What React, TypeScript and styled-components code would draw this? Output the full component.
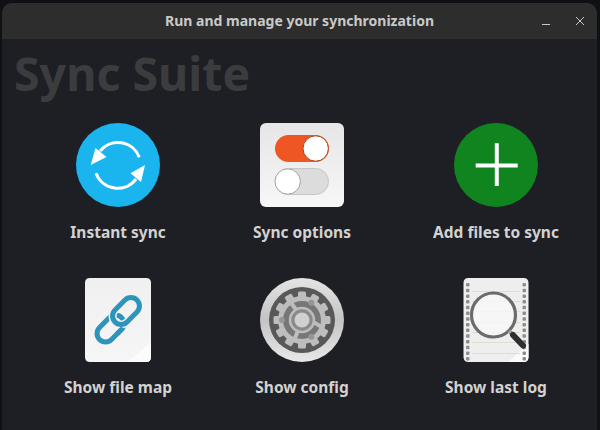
import { createGlobalStyle } from "styled-components";
import styled from "styled-components";
import type { ReactNode } from "react";

const GlobalStyle = createGlobalStyle`
  html, body {
    margin: 0;
    padding: 0;
    width: 600px;
    height: 430px;
    overflow: hidden;
    background: #0f1115;
    font-family: "Noto Sans", "Open Sans", sans-serif;
  }
`;

const SyncIcon = () => (
  <svg width="84" height="84" viewBox="0 0 84 84">
    <circle cx="42" cy="42" r="42" fill="#1ab5ee" />
    <g fill="none" stroke="#fff" strokeWidth="3">
      <path d="M24 28 A23 23 0 0 1 63.300 34.300" />
      <path d="M60 56 A23 23 0 0 1 20 50.300" />
    </g>
    <path d="M14.700 42 L19.500 25 L30.500 34 Z" fill="#fff" />
    <path d="M69 42 L54.500 50.300 L65 59 Z" fill="#fff" />
  </svg>
);

const OptionsIcon = () => (
  <svg width="84" height="84" viewBox="0 0 84 84">
    <defs>
      <linearGradient id="tile" x1="0" y1="0" x2="0" y2="1">
        <stop offset="0" stopColor="#e6e6e6" />
        <stop offset="1" stopColor="#f7f7f7" />
      </linearGradient>
    </defs>
    <rect width="84" height="84" rx="6" fill="url(#tile)" />
    <rect x="15" y="12" width="54" height="27" rx="13.500" fill="#ee5623" />
    <circle cx="55.700" cy="25.500" r="12.700" fill="#fff" stroke="#a8431f" strokeWidth="1" />
    <rect x="15.500" y="45.500" width="53" height="26" rx="13" fill="#dcdcdc" stroke="#c6c6c6" />
    <circle cx="27.700" cy="58.500" r="12.700" fill="#fff" stroke="#a0a0a0" strokeWidth="1" />
  </svg>
);

const AddIcon = () => (
  <svg width="84" height="84" viewBox="0 0 84 84">
    <circle cx="42" cy="42" r="42" fill="#10851f" />
    <path d="M42.800 20.300 V63 M21.700 42.500 H63.700" stroke="#fff" strokeWidth="4" fill="none" />
  </svg>
);

const MapIcon = () => (
  <svg width="84" height="84" viewBox="0 0 84 84">
    <defs>
      <linearGradient id="sheet" x1="0" y1="0" x2="0" y2="1">
        <stop offset="0" stopColor="#f0f0f0" />
        <stop offset="1" stopColor="#f6f6f6" />
      </linearGradient>
    </defs>
    <path d="M14 0 H70 Q75 0 75 5 V79 Q75 84 70 84 H14 Q9 84 9 79 V5 Q9 0 14 0 Z" fill="url(#sheet)" />
    <path d="M75 64 V79 Q75 84 70 84 H52 Z" fill="#fcfcfc" />
    <g fill="none">
      <rect x="19" y="42" width="31" height="17" rx="8.500" stroke="#2d95bd" strokeWidth="5" transform="rotate(-45 34.500 50.500)" />
      <rect x="34.500" y="24.500" width="31" height="17" rx="8.500" stroke="#f2f2f2" strokeWidth="8" transform="rotate(-45 50 33)" />
      <rect x="34.500" y="24.500" width="31" height="17" rx="8.500" stroke="#2d95bd" strokeWidth="5" transform="rotate(-45 50 33)" />
      <path d="M41 56 L47 50" stroke="#2d95bd" strokeWidth="5" />
    </g>
  </svg>
);

const teeth = Array.from({ length: 12 }, (_, i) => i * 30);

const ConfigIcon = () => (
  <svg width="84" height="84" viewBox="0 0 84 84">
    <defs>
      <linearGradient id="rim" x1="0" y1="0" x2="0" y2="1">
        <stop offset="0" stopColor="#e4e4e4" />
        <stop offset="0.5" stopColor="#c4c4c4" />
        <stop offset="1" stopColor="#e8e8e8" />
      </linearGradient>
    </defs>
    <circle cx="42" cy="42" r="42" fill="url(#rim)" />
    <circle cx="42" cy="42" r="33" fill="#585858" />
    <g fill="#bdbdbd">
      {teeth.map((a) => (
        <rect key={a} x="38" y="13.500" width="8" height="9" rx="1.500" transform={`rotate(${a} 42 42)`} />
      ))}
      <circle cx="42" cy="42" r="24" />
    </g>
    <circle cx="42" cy="42" r="19" fill="#777777" />
    <g stroke="#bdbdbd" strokeWidth="4" fill="none">
      <path d="M37 33 Q34 29 31.300 25.300 M53 44 Q57 46 61 48.700 M38 52 Q37 56 35 60" />
    </g>
    <circle cx="42" cy="42" r="12" fill="#8a8a8a" stroke="#bdbdbd" strokeWidth="2.500" />
    <circle cx="42" cy="42" r="7.500" fill="#d0d0d0" />
    <circle cx="51.300" cy="24.700" r="3" fill="#969696" />
    <circle cx="51.300" cy="58.700" r="3" fill="#969696" />
    <circle cx="22" cy="42" r="3" fill="#969696" />
  </svg>
);

const holes = Array.from({ length: 14 }, (_, i) => 5 + i * 5.700);
const ruled = [13, 23, 33, 44, 54, 64, 75];

const LogIcon = () => (
  <svg width="84" height="84" viewBox="0 0 84 84">
    <path d="M14.500 0 H69.500 Q74.500 0 74.500 5 V79 Q74.500 84 69.500 84 H14.500 Q9.500 84 9.500 79 V5 Q9.500 0 14.500 0 Z" fill="#eeeeee" />
    <path d="M74.500 66 V79 Q74.500 84 69.500 84 H54 Z" fill="#fbfbfb" />
    {holes.map((y) => (
      <g key={y} fill="#8d8d8d">
        <rect x="12" y={y} width="3.500" height="3.500" rx="1" />
        <rect x="68.500" y={y} width="3.500" height="3.500" rx="1" />
      </g>
    ))}
    <g stroke="#e2dccb" strokeWidth="1">
      {ruled.map((y) => (
        <path key={y} d={`M18 ${y + 0.5} H66`} />
      ))}
    </g>
    <circle cx="39.500" cy="37" r="22" fill="#f8f8f8" fillOpacity="0.8" stroke="#6b6b6b" strokeWidth="3.200" />
    <path d="M55 53 L59 57" stroke="#a0a0a0" strokeWidth="4" />
    <path d="M59 57 L69 67.500" stroke="#2f2f2f" strokeWidth="6" strokeLinecap="round" />
  </svg>
);

const ACTIONS: { label: string; icon: ReactNode }[] = [
  { label: "Instant sync", icon: <SyncIcon /> },
  { label: "Sync options", icon: <OptionsIcon /> },
  { label: "Add files to sync", icon: <AddIcon /> },
  { label: "Show file map", icon: <MapIcon /> },
  { label: "Show config", icon: <ConfigIcon /> },
  { label: "Show last log", icon: <LogIcon /> },
];

export default function App() {
  return (
    <>
      <GlobalStyle />
      <Desktop>
        <Window>
          <TitleBar>
            <Title>Run and manage your synchronization</Title>
            <WindowButtons>
              <WindowButton aria-label="Minimize">
                <svg width="10" height="10" viewBox="0 0 10 10">
                  <path d="M1 8.500 H9" stroke="#c8c8c8" strokeWidth="1.200" />
                </svg>
              </WindowButton>
              <WindowButton aria-label="Close">
                <svg width="10" height="10" viewBox="0 0 10 10">
                  <path d="M1 1 L9 9 M9 1 L1 9" stroke="#c8c8c8" strokeWidth="1" />
                </svg>
              </WindowButton>
            </WindowButtons>
          </TitleBar>
          <Heading>Sync Suite</Heading>
          <ActionGrid>
            {ACTIONS.map((action) => (
              <Action key={action.label}>
                {action.icon}
                <ActionLabel>{action.label}</ActionLabel>
              </Action>
            ))}
          </ActionGrid>
        </Window>
      </Desktop>
    </>
  );
}

const Desktop = styled.div`
  width: 600px;
  height: 430px;
  padding: 3px 3px 0 2px;
  box-sizing: border-box;
  overflow: hidden;
`;

const Window = styled.div`
  height: 100%;
  background: #1e1f24;
  border-radius: 10px 10px 0 0;
  overflow: hidden;
`;

const TitleBar = styled.div`
  height: 36px;
  background: #2d2d2d;
  display: flex;
  align-items: center;
  justify-content: center;
  position: relative;
`;

const Title = styled.div`
  font-size: 14px;
  font-weight: 700;
  color: #c9c9c9;
  margin-top: -2px;
`;

const WindowButtons = styled.div`
  position: absolute;
  right: 7px;
  top: 8px;
  display: flex;
  gap: 14px;
`;

const WindowButton = styled.button`
  width: 20px;
  height: 20px;
  padding: 0;
  border: none;
  background: none;
  display: flex;
  align-items: center;
  justify-content: center;
`;

const Heading = styled.h1`
  margin: 0;
  padding: 10px 0 0 12px;
  height: 46px;
  font-size: 46.500px;
  line-height: 48px;
  font-weight: 700;
  color: #3b3c3e;
`;

const ActionGrid = styled.div`
  display: grid;
  grid-template-columns: 184px 184px 204px;
  grid-auto-rows: 155px;
  padding: 28px 0 0 24px;
`;

const Action = styled.div`
  display: flex;
  flex-direction: column;
  align-items: center;
`;

const ActionLabel = styled.div`
  margin-top: 14px;
  font-size: 15.500px;
  line-height: 22px;
  font-weight: 700;
  color: #d2d2d2;
  white-space: nowrap;
`;
